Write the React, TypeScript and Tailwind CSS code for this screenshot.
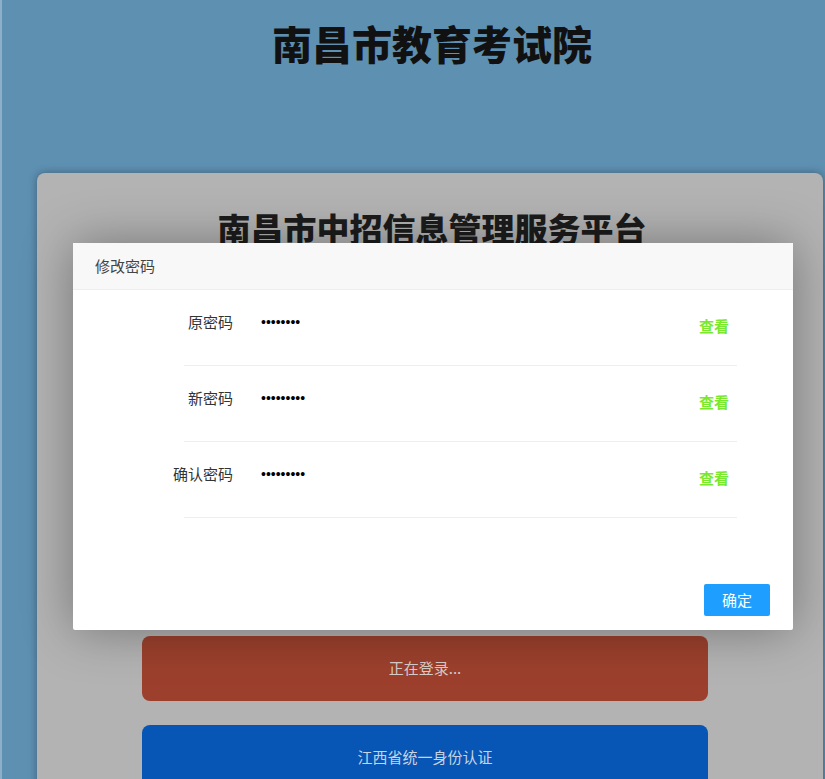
import React from 'react';

const rows = [
  { label: '原密码', value: 'abcdefgh' },
  { label: '新密码', value: 'abcdefghi' },
  { label: '确认密码', value: 'abcdefghi' },
];

const PasswordModal: React.FC = () => (
  <div className="absolute left-[71px] top-[243px] w-[720px] h-[387px] bg-white rounded-[2px] shadow-[0_0_50px_rgba(0,0,0,0.35)] flex flex-col">
    <div className="h-[47px] shrink-0 bg-[#f8f8f8] border-b border-[#eeeeee] flex items-center pl-[22px] text-[15px] text-[#444]">
      修改密码
    </div>
    <div className="flex-1 flex flex-col pl-[111px] pr-[56px]">
      {rows.map((row) => (
        <div key={row.label} className="h-[76px] border-b border-[#eeeeee] flex items-start">
          <div className="w-[49px] shrink-0 flex justify-end whitespace-nowrap pt-[22px] text-[15px] leading-[20px] text-[#333]">
            {row.label}
          </div>
          <input
            type="password"
            readOnly
            value={row.value}
            className="ml-[28px] mt-[22px] h-[20px] flex-1 outline-none text-[14px] text-black font-['Liberation_Sans',sans-serif] bg-transparent"
          />
          <span className="mt-[26px] mr-[8px] text-[15px] leading-[20px] font-bold text-[#7ae82c]">查看</span>
        </div>
      ))}
    </div>
    <div className="flex justify-end pr-[23px] pb-[14px]">
      <button className="w-[66px] h-[32px] rounded-[2px] bg-[#1e9fff] text-white text-[15px]">确定</button>
    </div>
  </div>
);

export default function App() {
  return (
    <div className="relative h-[779px] overflow-hidden bg-[#5e90b2] border-l-[2px] border-[#8db0c8] font-['Noto_Sans_CJK_SC','Noto_Sans',sans-serif]">
      <div className="ml-[35px] w-[786px] pt-[18px]">
        <h1 className="h-[50px] leading-[50px] text-center text-[40px] font-black text-[#111] pl-[4px]">南昌市教育考试院</h1>
        <div className="mt-[105px] h-[700px] rounded-t-[8px] bg-[#b3b3b3] shadow-[0_0_8px_rgba(0,0,0,0.35)] pt-[35px]">
          <h2 className="h-[40px] leading-[40px] text-center text-[33px] font-black text-[#1c1c1c] pl-[4px]">南昌市中招信息管理服务平台</h2>
          <div className="h-[388px] pl-[105px] pr-[115px] flex flex-col gap-[24px] pt-[60px]">
            <div className="h-[56px] rounded-[6px] bg-[#c4c4c4]" />
            <div className="h-[56px] rounded-[6px] bg-[#c4c4c4]" />
          </div>
          <div className="pl-[105px] pr-[115px] flex flex-col gap-[24px]">
            <button className="h-[65px] w-full rounded-[8px] bg-[#9c402d] text-[15px] text-[#d8cdc8]">正在登录...</button>
            <button className="h-[65px] w-full rounded-[8px] bg-[#0756b6] text-[15px] text-[#c8d4e4]">江西省统一身份认证</button>
          </div>
        </div>
      </div>
      <PasswordModal />
    </div>
  );
}
